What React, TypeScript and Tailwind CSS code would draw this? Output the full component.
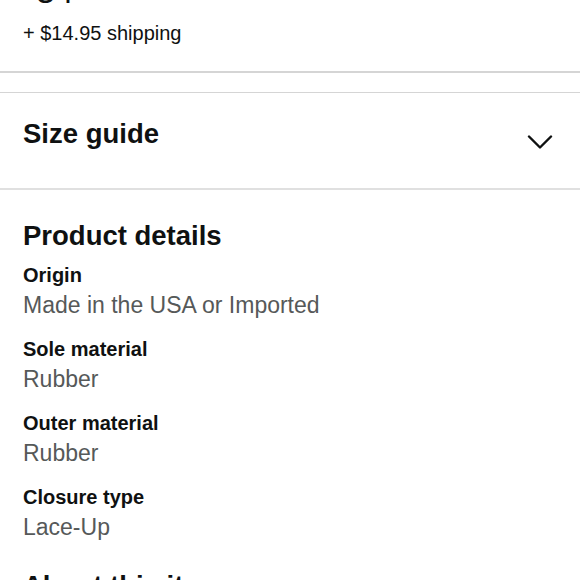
import React from "react";

const details = [
  { label: "Origin", value: "Made in the USA or Imported" },
  { label: "Sole material", value: "Rubber" },
  { label: "Outer material", value: "Rubber" },
  { label: "Closure type", value: "Lace-Up" },
];

export default function App() {
  return (
    <div
      className="w-[580px] h-[580px] overflow-hidden bg-white text-[#0f1111]"
      style={{ fontFamily: '"Liberation Sans", Arial, sans-serif' }}
    >
      <div className="px-[23px]">
        <div className="-mt-[26px] flex items-start text-[34px] leading-[34px] text-[#0f1111]">
          <span className="text-[16px] leading-[16px] mt-[2px]">$</span>
          <span className="ml-[4px]">34</span>
          <span className="text-[16px] leading-[16px] mt-[2px]">99</span>
        </div>
        <div className="mt-[13px] pb-[26px] text-[20px] leading-[24px] text-[#0f1111]">
          + $14.95 shipping
        </div>
      </div>
      <div className="h-[2px] bg-[#d5d5d5]" />
      <div className="h-[19px]" />
      <div className="h-[1px] bg-[#d5d5d5]" />
      <div className="px-[23px] pt-[25px] pb-[38px] flex justify-between items-start">
        <div className="text-[27.5px] leading-[32px] font-bold">Size guide</div>
        <svg
          width="26"
          height="14"
          viewBox="0 0 26 14"
          className="mt-[17px] mr-[4px]"
          fill="none"
          stroke="#0f1111"
          strokeWidth="2.4"
          strokeLinecap="round"
          strokeLinejoin="round"
        >
          <path d="M2 1.5 L13 12.5 L24 1.5" />
        </svg>
      </div>
      <div className="h-[2px] bg-[#e0e0e0]" />
      <div className="px-[23px] pt-[30px]">
        <div className="text-[27.5px] leading-[32px] font-bold">Product details</div>
        <div className="mt-[11px] flex flex-col gap-[17px]">
          {details.map((d) => (
            <div key={d.label}>
              <div className="text-[20px] leading-[24px] font-bold">{d.label}</div>
              <div className="mt-[3px] text-[23px] leading-[30px] text-[#565959]">{d.value}</div>
            </div>
          ))}
        </div>
        <div className="mt-[28px] text-[27.5px] leading-[32px] font-bold">About this item</div>
      </div>
    </div>
  );
}
